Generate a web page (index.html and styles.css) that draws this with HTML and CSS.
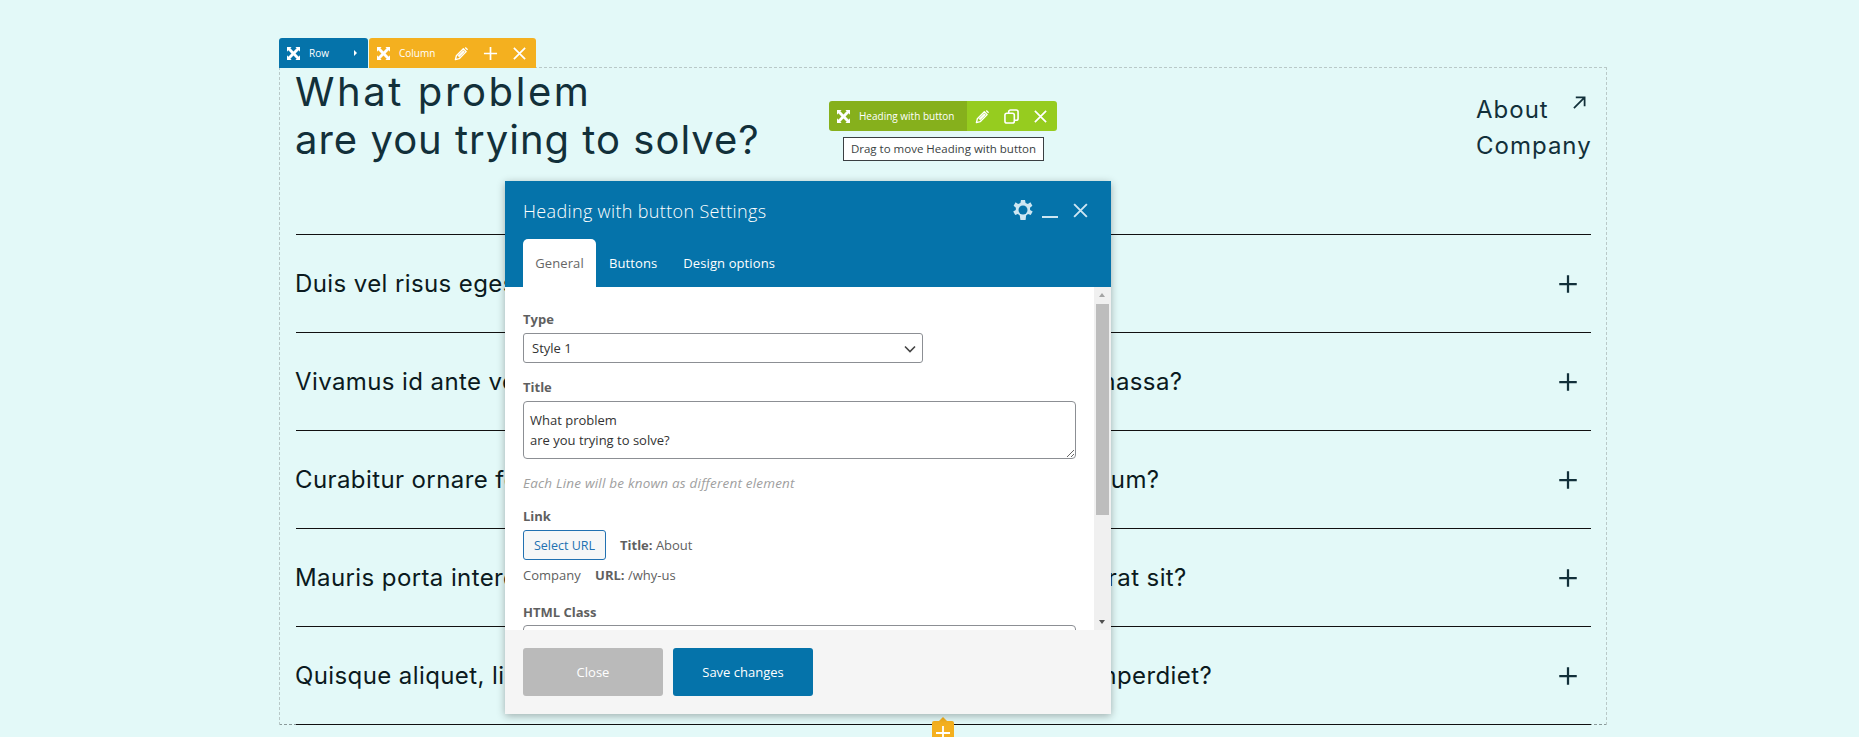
FILE: index.html
```html
<!DOCTYPE html>
<html lang="en">
<head>
  <meta charset="UTF-8">
  <title>Heading with button Settings</title>
  <link rel="stylesheet" href="styles.css">
</head>
<body>
  <svg class="defs" width="0" height="0">
    <symbol id="i-move" viewBox="0 0 14 14">
      <path d="M0 0h5L3.600 1.400 7 4.800l3.400-3.400L9 0h5v5l-1.400-1.400L9.200 7l3.400 3.400L14 9v5H9l1.400-1.400L7 9.200l-3.400 3.400L5 14H0V9l1.400 1.400L4.800 7 1.400 3.600 0 5z" fill="currentColor"/>
    </symbol>
    <symbol id="i-pencil" viewBox="0 0 16 16">
      <path d="M1.500 14.500l1-4L10 3l3 3-7.500 7.500z" fill="none" stroke="currentColor" stroke-width="1.500" stroke-linejoin="round"/>
      <path d="M4 10.500L10 4.500l1.500 1.500-6 6zM11.500 2l1-1 2.500 2.500-1 1z" fill="currentColor"/>
    </symbol>
    <symbol id="i-plus" viewBox="0 0 16 16">
      <path d="M8 1v14M1 8h14" stroke="currentColor" stroke-width="1.800" fill="none"/>
    </symbol>
    <symbol id="i-close" viewBox="0 0 16 16">
      <path d="M2 2l12 12M14 2L2 14" stroke="currentColor" stroke-width="1.800" fill="none"/>
    </symbol>
    <symbol id="i-copy" viewBox="0 0 16 16">
      <rect x="1" y="4.500" width="10" height="10.500" rx="2" fill="none" stroke="currentColor" stroke-width="1.700"/>
      <path d="M5 4.500V3a2 2 0 0 1 2-2h6a2 2 0 0 1 2 2v7a2 2 0 0 1-2 2h-2" fill="none" stroke="currentColor" stroke-width="1.700"/>
    </symbol>
    <symbol id="i-gear" viewBox="0 0 20 20">
      <path d="M8 0h4l.6 3 2.300 1 2.500-1.700 2 3.400L17 7.700l.1 2.300 2.600 1.500-2 3.400-2.700-1-1.900 1.500L12.600 20H7.400l-.6-4.600-1.900-1.500-2.700 1-2-3.400L2.800 10l.1-2.300L.6 5.700l2-3.400L5.100 4l2.300-1z" fill="currentColor"/>
      <circle cx="10" cy="10" r="4.500" fill="#0573aa"/>
    </symbol>
  </svg>

  <section class="row-box">
    <header class="intro">
      <h1><span class="h1-first">What problem</span><br>are you trying to solve?</h1>
      <a class="about" href="#">
        <span class="about-first">About
          <svg class="about-arrow" viewBox="0 0 14 14" width="13" height="13"><path d="M1 13L12.500 1.500M3 1.500h9.500V11" fill="none" stroke="currentColor" stroke-width="1.900"/></svg>
        </span>
        <span>Company</span>
      </a>
    </header>
    <ul class="faq">
      <li><span>Duis vel risus egestas, finibus nulla sit amet, placerat neque?</span><svg class="faq-plus"><use href="#i-plus"/></svg></li>
      <li><span>Vivamus id ante vel tortor pretium, dictum sem sed, viverra a neque massa?</span><svg class="faq-plus"><use href="#i-plus"/></svg></li>
      <li><span>Curabitur ornare felis vel lectus dictum, eget finibus odio sed elementum?</span><svg class="faq-plus"><use href="#i-plus"/></svg></li>
      <li><span>Mauris porta interdum justo, quis feugiat ut lorem dapibus enim sed erat sit?</span><svg class="faq-plus"><use href="#i-plus"/></svg></li>
      <li><span>Quisque aliquet, ligula eget porta tortor, nisl massa a dictum ex sed imperdiet?</span><svg class="faq-plus"><use href="#i-plus"/></svg></li>
    </ul>
  </section>

  <div class="bar bar-row">
    <span class="bar-part part-row">
      <svg class="ico-move"><use href="#i-move"/></svg>
      <span class="bar-name">Row</span>
      <span class="caret-right"></span>
    </span>
    <span class="bar-part part-column">
      <svg class="ico-move"><use href="#i-move"/></svg>
      <span class="bar-name">Column</span>
      <svg class="ico ico-first"><use href="#i-pencil"/></svg>
      <svg class="ico"><use href="#i-plus"/></svg>
      <svg class="ico"><use href="#i-close"/></svg>
    </span>
  </div>

  <div class="bar bar-element">
    <span class="part-handle">
      <svg class="ico-move"><use href="#i-move"/></svg>
      <span class="bar-name">Heading with button</span>
    </span>
    <span class="part-tools">
      <svg class="ico"><use href="#i-pencil"/></svg>
      <svg class="ico"><use href="#i-copy"/></svg>
      <svg class="ico"><use href="#i-close"/></svg>
    </span>
  </div>
  <div class="tip">Drag to move Heading with button</div>

  <div class="add-tab"><svg><use href="#i-plus"/></svg></div>

  <div class="modal">
    <div class="modal-head">
      <div class="modal-title-row">
        <h2>Heading with button Settings</h2>
        <svg class="head-gear"><use href="#i-gear"/></svg>
        <span class="head-min"></span>
        <svg class="head-close"><use href="#i-close"/></svg>
      </div>
      <div class="tabs">
        <a class="tab active" href="#">General</a>
        <a class="tab" href="#">Buttons</a>
        <a class="tab" href="#">Design options</a>
      </div>
    </div>
    <div class="modal-main">
      <div class="form">
        <label class="lbl lbl-type">Type</label>
        <div class="select-wrap">
          <select class="select"><option>Style 1</option></select>
          <svg class="chevron" viewBox="0 0 12 8" width="12" height="8"><path d="M1 1.500l5 5 5-5" fill="none" stroke="#444" stroke-width="1.600"/></svg>
        </div>
        <label class="lbl lbl-title">Title</label>
        <textarea class="area" readonly>What problem
are you trying to solve?</textarea>
        <p class="help">Each Line will be known as different element</p>
        <label class="lbl lbl-link">Link</label>
        <div class="link-row">
          <button class="url-btn">Select URL</button>
          <span class="link-info"><b>Title:</b> About</span>
        </div>
        <p class="link-more">Company <b>URL:</b> /why-us</p>
        <label class="lbl lbl-class">HTML Class</label>
        <input class="text-input" type="text">
      </div>
      <div class="scroll">
        <span class="arrow-up"></span>
        <span class="thumb"></span>
        <span class="arrow-down"></span>
      </div>
    </div>
    <div class="modal-foot">
      <button class="btn btn-close">Close</button>
      <button class="btn btn-save">Save changes</button>
    </div>
  </div>
</body>
</html>
```

FILE: styles.css
```css
* {
  box-sizing: border-box;
}
html, body {
  height: 737px;
  overflow: hidden;
}
body {
  margin: 0;
  position: relative;
  background-color: #e3f9f8;
  font-family: "Open Sans", sans-serif;
}
.defs {
  position: absolute;
}
.row-box {
  width: 1328px;
  height: 658px;
  margin: 67px 0 0 279px;
  padding: 0 15px 0 16px;
  border: 1px dashed #b9c9c8;
  border-bottom-color: #8a9a9a;
}
.intro {
  display: flex;
  justify-content: space-between;
  height: 166px;
  color: #12303a;
  font-family: Inter, sans-serif;
}
h1 {
  margin: 0 0 0 -1px;
  font-size: 40px;
  font-weight: 400;
  letter-spacing: 1px;
  line-height: 48px;
}
.h1-first {
  letter-spacing: 2.600px;
}
.about {
  display: flex;
  flex-direction: column;
  gap: 7px;
  width: 115px;
  margin-top: 27px;
  color: #12303a;
  font-size: 24px;
  letter-spacing: 1px;
  line-height: 29px;
  text-decoration: none;
}
.about-first {
  position: relative;
}
.about-arrow {
  position: absolute;
  left: 97px;
  top: 1px;
}
.faq {
  margin: 0;
  padding: 0;
  list-style: none;
  border-top: 1px solid #111;
}
.faq li {
  display: flex;
  justify-content: space-between;
  align-items: center;
  height: 98px;
  padding: 0 13px 0 0;
  border-bottom: 1px solid #111;
  color: #0b1a20;
  font-family: Inter, sans-serif;
  font-size: 24px;
  letter-spacing: 0.4px;
}
.faq li span {
  margin-left: -1px;
}
.faq-plus {
  width: 20px;
  height: 20px;
  color: #12303a;
}

/* toolbars */
.bar {
  position: absolute;
  display: flex;
  height: 30px;
  color: #fff;
  font-size: 10px;
}
.bar-row {
  left: 279px;
  top: 38px;
}
.bar-part {
  display: flex;
  align-items: center;
  height: 30px;
  border-radius: 3px 3px 0 0;
}
.part-row {
  width: 89px;
  margin-right: 1px;
  padding-left: 8px;
  background-color: #0573aa;
}
.part-column {
  width: 167px;
  padding-left: 8px;
  background-color: #f4b01f;
}
.ico-move {
  flex: none;
  width: 13px;
  height: 13px;
  margin-right: 9px;
}
.part-row .bar-name {
  width: 45px;
}
.part-column .bar-name {
  width: 55px;
}
.caret-right {
  width: 0;
  height: 0;
  border-left: 3px solid #fff;
  border-top: 3px solid transparent;
  border-bottom: 3px solid transparent;
}
.ico {
  flex: none;
  width: 15px;
  height: 15px;
  margin-left: 14px;
}
.ico-first {
  margin-left: 0;
}
.bar-element {
  left: 829px;
  top: 101px;
  width: 228px;
  border-radius: 3px;
  overflow: hidden;
}
.part-handle {
  display: flex;
  align-items: center;
  width: 138px;
  padding-left: 8px;
  background-color: #86b01c;
}
.part-tools {
  display: flex;
  align-items: center;
  flex: 1;
  padding-left: 8px;
  background-color: #96cc1f;
}
.part-tools .ico:first-child {
  margin-left: 0;
}
.tip {
  position: absolute;
  left: 843px;
  top: 137px;
  width: 201px;
  height: 24px;
  border: 1px solid #3a3f42;
  background-color: #fff;
  color: #3a3f42;
  font-size: 11.500px;
  line-height: 22px;
  text-align: center;
}
.add-tab {
  position: absolute;
  left: 932px;
  top: 721px;
  width: 22px;
  height: 16px;
  background-color: #f4b01f;
  border-radius: 2px 2px 0 0;
  color: #fff;
}
.add-tab::before {
  content: "";
  position: absolute;
  left: 7px;
  top: -4px;
  border-left: 4px solid transparent;
  border-right: 4px solid transparent;
  border-bottom: 4px solid #f4b01f;
}
.add-tab svg {
  display: block;
  width: 16px;
  height: 16px;
  margin: 4px 3px 0;
}

/* modal */
.modal {
  position: absolute;
  left: 505px;
  top: 181px;
  display: flex;
  flex-direction: column;
  width: 606px;
  height: 533px;
  background-color: #fff;
  box-shadow: 0 2px 8px rgba(0, 0, 0, 0.3);
}
.modal-head {
  height: 106px;
  padding: 0 18px;
  background-color: #0573aa;
  color: #fff;
}
.modal-title-row {
  display: flex;
  align-items: center;
  height: 58px;
}
h2 {
  flex: 1;
  margin: 2px 0 0;
  font-size: 18px;
  font-weight: 300;
  letter-spacing: 0.35px;
}
.head-gear {
  width: 20px;
  height: 20px;
  margin-right: 9px;
  color: #cde6f2;
}
.head-min {
  width: 16px;
  height: 2px;
  margin: 14px 14px 0 0;
  background-color: #cde6f2;
}
.head-close {
  width: 17px;
  height: 17px;
  margin-right: 4px;
  color: #cde6f2;
}
.tabs {
  display: flex;
  height: 48px;
}
.tab {
  height: 48px;
  padding: 0 13px;
  color: #fff;
  font-size: 13px;
  letter-spacing: 0.1px;
  line-height: 49px;
  text-decoration: none;
}
.tab.active {
  width: 73px;
  padding: 0;
  margin-right: 0;
  background-color: #fff;
  border-radius: 5px 5px 0 0;
  color: #666;
  text-align: center;
}
.modal-main {
  display: flex;
  height: 343px;
  overflow: hidden;
}
.form {
  flex: 1;
  padding: 0 18px;
  color: #5f5f5f;
  font-size: 13px;
}
.lbl {
  display: block;
  font-weight: 700;
  line-height: 18px;
}
.lbl-type {
  margin-top: 23px;
}
.select-wrap {
  position: relative;
  width: 400px;
  height: 30px;
  margin-top: 5px;
}
.select {
  width: 100%;
  height: 30px;
  padding: 0 8px;
  appearance: none;
  background: #fff;
  border: 1px solid #8c8f94;
  border-radius: 3px;
  color: #333;
  font: 13px "Open Sans", sans-serif;
}
.chevron {
  position: absolute;
  right: 7px;
  top: 12px;
}
.lbl-title {
  margin-top: 15px;
}
.area {
  display: block;
  width: 553px;
  height: 58px;
  margin-top: 5px;
  padding: 8px 6px 0;
  border: 1px solid #8c8f94;
  border-radius: 4px;
  color: #333;
  font: 13px/20px "Open Sans", sans-serif;
}
.help {
  margin: 14px 0 0;
  color: #a0a0a0;
  font-size: 13.500px;
  font-style: italic;
  letter-spacing: 0.2px;
  line-height: 20px;
}
.lbl-link {
  margin-top: 14px;
}
.link-row {
  display: flex;
  align-items: center;
  gap: 14px;
  height: 30px;
  margin-top: 5px;
}
.url-btn {
  width: 83px;
  height: 30px;
  padding: 0;
  background-color: #f6f7f7;
  border: 1px solid #2271b1;
  border-radius: 3px;
  color: #2271b1;
  font: 12.500px "Open Sans", sans-serif;
}
.link-more {
  margin: 5px 0 0;
  line-height: 20px;
}
.link-more b {
  margin-left: 11px;
}
.lbl-class {
  margin-top: 18px;
}
.text-input {
  display: block;
  width: 553px;
  height: 30px;
  margin-top: 4px;
  border: 1px solid #8c8f94;
  border-radius: 4px;
}
.scroll {
  position: relative;
  flex: none;
  width: 17px;
  background-color: #f0f0f0;
}
.thumb {
  position: absolute;
  left: 2px;
  top: 17px;
  width: 13px;
  height: 211px;
  background-color: #bdbdbd;
}
.arrow-up, .arrow-down {
  position: absolute;
  left: 5px;
  width: 0;
  height: 0;
  border-left: 3.500px solid transparent;
  border-right: 3.500px solid transparent;
}
.arrow-up {
  top: 6px;
  border-bottom: 4px solid #a3a3a3;
}
.arrow-down {
  bottom: 6px;
  border-top: 4px solid #505050;
}
.modal-foot {
  display: flex;
  gap: 10px;
  flex: 1;
  padding: 18px 18px 0;
  background-color: #f5f5f5;
}
.btn {
  width: 140px;
  height: 48px;
  border: none;
  border-radius: 3px;
  color: #fff;
  font: 13px "Open Sans", sans-serif;
}
.btn-close {
  background-color: #bababa;
}
.btn-save {
  background-color: #0573aa;
}
```
